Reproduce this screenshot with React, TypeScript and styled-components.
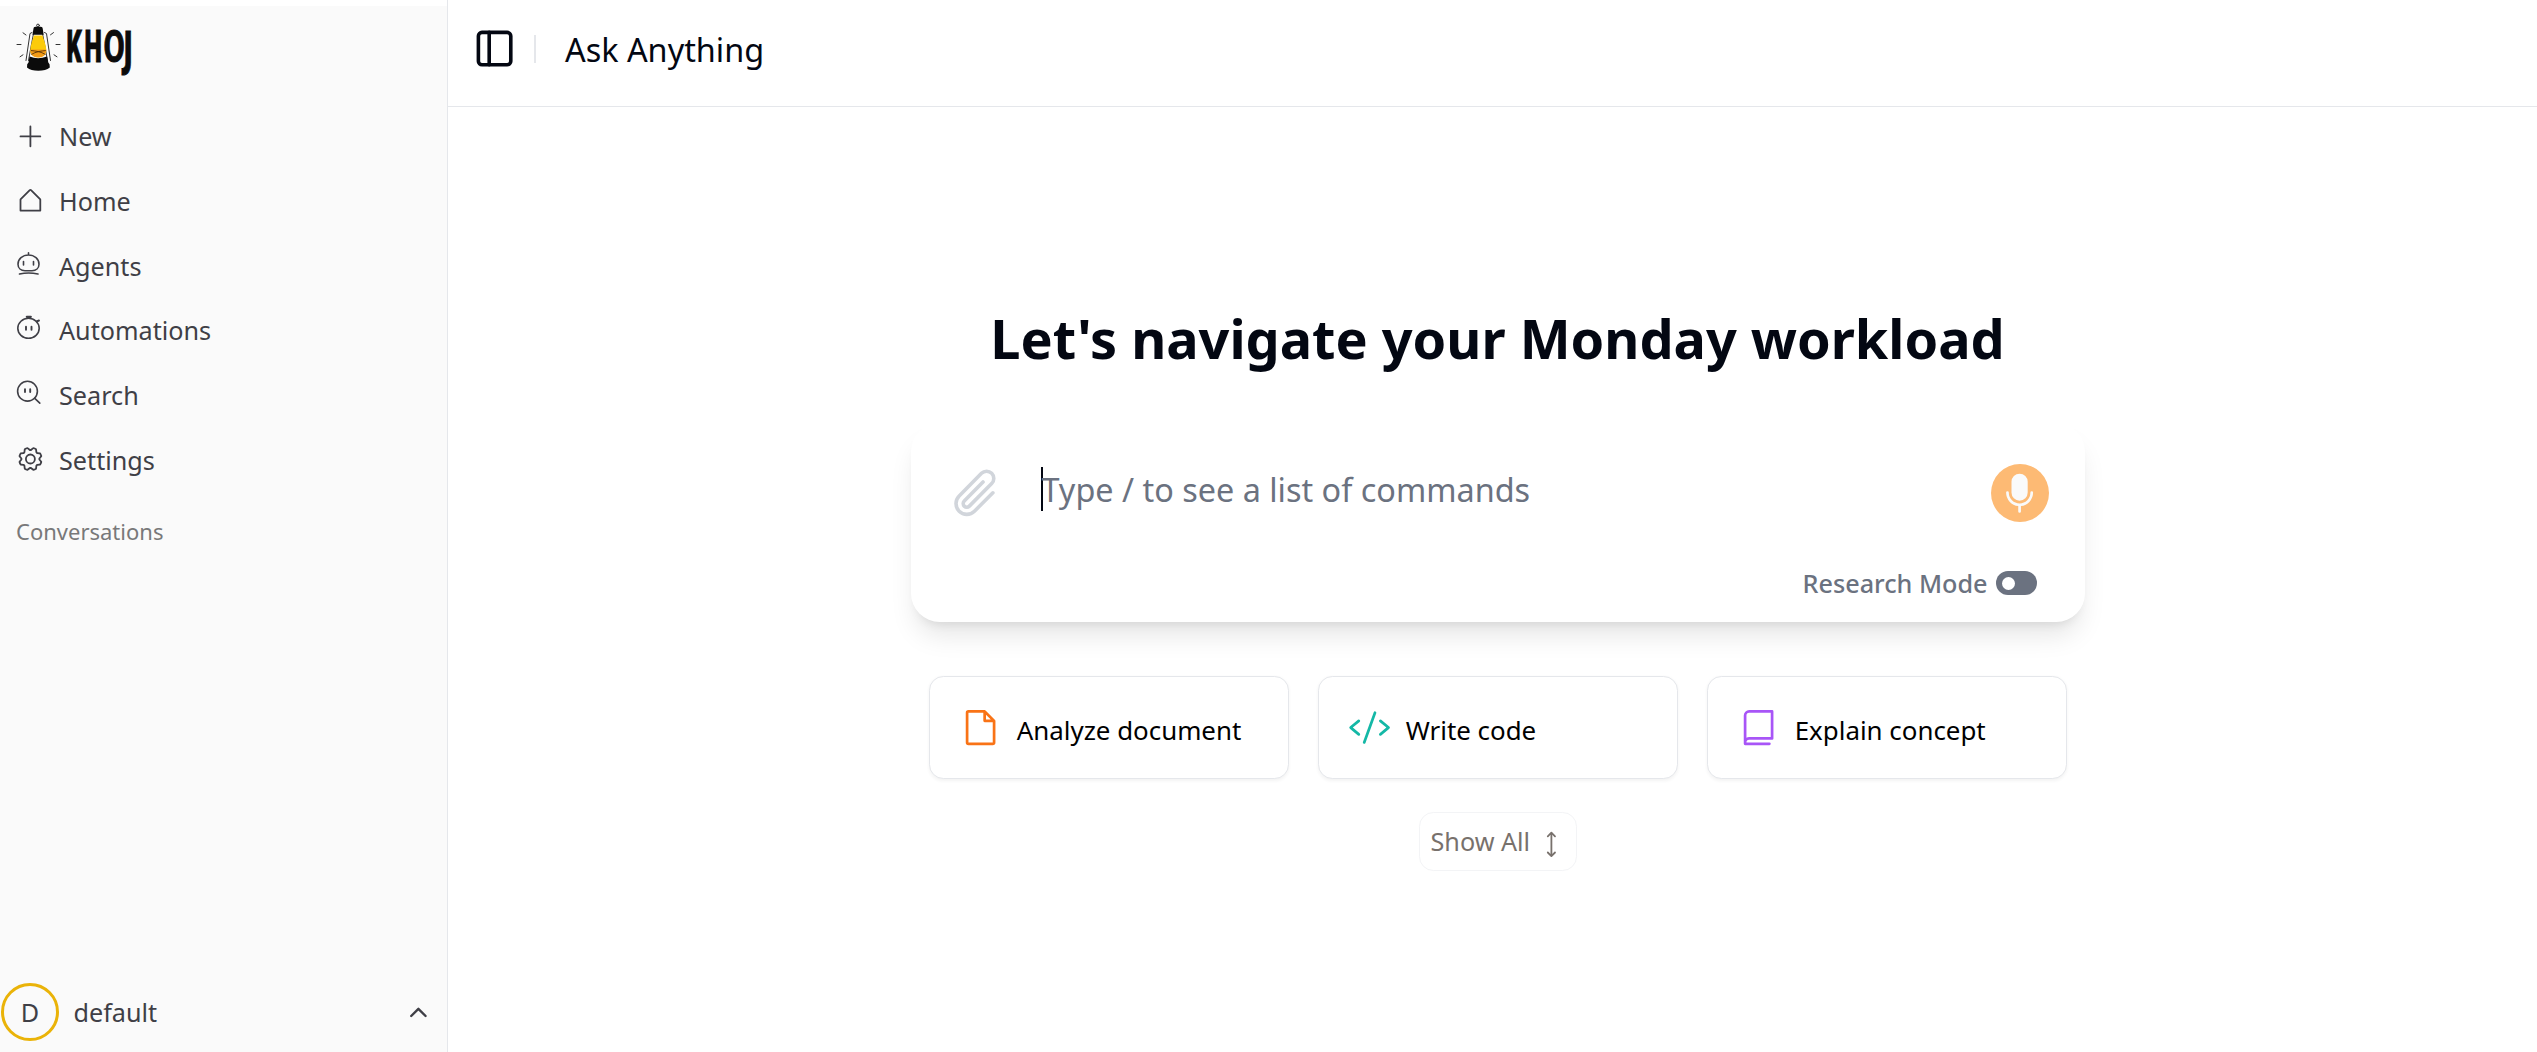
import React from 'react';
import styled, { createGlobalStyle } from 'styled-components';
import { PanelLeft, ChevronUp } from 'lucide-react';
import {
  PiPlus,
  PiHouseSimple,
  PiGear,
  PiPaperclip,
  PiMicrophoneFill,
  PiFile,
  PiCode,
  PiBook,
  PiArrowsVertical,
} from 'react-icons/pi';

const GlobalStyle = createGlobalStyle`
  *, *::before, *::after { box-sizing: border-box; }
  html, body, #root { height: 100%; }
  body {
    margin: 0;
    background: #fff;
    color: #030712;
    font-family: "Noto Sans", sans-serif;
    overflow: hidden;
  }
  button { font: inherit; color: inherit; background: none; border: 0; padding: 0; }
  svg { display: block; flex: none; }
`;

const Shell = styled.div`
  display: flex;
  height: 1052px;
`;

const Sidebar = styled.aside`
  display: flex;
  flex-direction: column;
  flex: none;
  width: 448px;
  padding-top: 6px;
  border-right: 1px solid #e5e7eb;
  background: #fafafa linear-gradient(#fff, #fff) 0 0 / 100% 6px no-repeat;
  color: #3f3f46;
`;

const Brand = styled.div`
  height: 98px;
  padding: 16px 0 0 14px;
`;

const Nav = styled.nav`
  display: flex;
  flex-direction: column;
`;

const NavItem = styled.a`
  display: flex;
  align-items: center;
  height: 64.7px;
  padding-left: 16px;
  font-size: 25.2px;
  line-height: 36px;
`;

const NavIcon = styled.span<{ $lift?: number }>`
  display: flex;
  flex: none;
  width: 43px;
  transform: translateY(${(p) => -(p.$lift ?? 0)}px);
`;

const SectionLabel = styled.div`
  padding: 22.6px 0 0 16px;
  font-size: 22px;
  line-height: 32px;
  color: #787879;
`;

const UserRow = styled.div`
  display: flex;
  align-items: center;
  height: 58px;
  margin: auto 14px 11px 1px;
  font-size: 25.2px;
`;

const Avatar = styled.span`
  display: grid;
  place-items: center;
  width: 58px;
  height: 58px;
  margin-right: 14.5px;
  border: 3px solid #eab308;
  border-radius: 50%;
`;

const UserName = styled.span`
  flex: 1;
`;

const Main = styled.main`
  display: flex;
  flex: 1;
  flex-direction: column;
  min-width: 0;
`;

const Header = styled.header`
  display: flex;
  align-items: center;
  height: 107px;
  padding: 0 0 8px 25px;
  border-bottom: 1px solid #e5e7eb;
`;

const Divider = styled.span`
  width: 2px;
  height: 28px;
  margin: 0 29px 0 17.8px;
  background: #e5e7eb;
`;

const PageTitle = styled.h2`
  margin: 1px 0 0;
  font-size: 32.4px;
  font-weight: 400;
  line-height: 49px;
`;

const Content = styled.section`
  display: flex;
  flex-direction: column;
  align-items: center;
  padding: 196px 0 0 10px;
`;

const Greeting = styled.h1`
  margin: 0 0 50px;
  font-size: 54px;
  font-weight: 700;
  line-height: 70px;
  white-space: nowrap;
`;

const Composer = styled.div`
  width: 1174px;
  height: 199px;
  padding: 0 36px 0 36px;
  border-radius: 28.8px;
  background: #fff;
  box-shadow: 0 18px 27px -5.4px rgba(0, 0, 0, 0.1), 0 7.2px 10.8px -7.2px rgba(0, 0, 0, 0.1);
`;

const ComposerRow = styled.div`
  display: flex;
  align-items: center;
  height: 140px;
`;

const AttachButton = styled.button`
  display: flex;
  color: #d1d5db;
`;

const Caret = styled.span`
  width: 2px;
  height: 44px;
  margin: 0 0 9px 37px;
  background: #030712;
`;

const Placeholder = styled.span`
  flex: 1;
  margin: 0 0 9px -1.6px;
  font-size: 32.4px;
  color: #6b7280;
`;

const MicButton = styled.button`
  display: grid;
  place-items: center;
  width: 58px;
  height: 58px;
  border-radius: 50%;
  background: #fdba74;
  color: #fafafa;
`;

const ModeRow = styled.div`
  display: flex;
  align-items: center;
  justify-content: flex-end;
  gap: 8px;
  height: 40px;
  padding-right: 12px;
  color: #6b7280;
  font-size: 25.2px;
  font-weight: 500;
`;

const Toggle = styled.span`
  display: flex;
  align-items: center;
  width: 41px;
  height: 24px;
  padding-left: 6px;
  border-radius: 12px;
  background: #6b7280;
`;

const ToggleKnob = styled.span`
  width: 13px;
  height: 13px;
  border-radius: 50%;
  background: #fff;
`;

const Suggestions = styled.div`
  display: flex;
  gap: 29px;
  margin-top: 54px;
`;

const SuggestionCard = styled.button<{ $accent: string }>`
  display: flex;
  align-items: center;
  width: 360px;
  height: 103px;
  padding-left: 29px;
  border: 1px solid #e5e7eb;
  border-radius: 14.4px;
  background: #fff;
  box-shadow: 0 1.8px 3.6px rgba(0, 0, 0, 0.05);
  color: #000;
  font-size: 25.9px;

  svg {
    color: ${(p) => p.$accent};
  }
`;

const SuggestionText = styled.span`
  margin: 5px 0 0 15px;
`;

const ShowAll = styled.button`
  display: flex;
  align-items: center;
  gap: 7px;
  width: 158px;
  height: 59px;
  margin-top: 33px;
  padding: 0 0 2px 11px;
  border: 1px solid #f3f4f6;
  border-radius: 14.4px;
  color: #78716c;
  font-size: 25.2px;

  svg {
    margin-top: 8px;
  }
`;

const LogoSvg = styled.svg`
  overflow: visible;
`;

const KhojLogo = () => (
  <LogoSvg width="122" height="60" viewBox="14 22 122 60" role="img" aria-label="Khoj">
    <g stroke="#333" strokeWidth="1" fill="none" strokeLinecap="round">
      <path d="M17 44.500h4M23 32.800l3 2.200M20 56.800l3-2M56 44.500h4M50.500 34.800l3-2.200M54 54.800l3 2" />
      <circle cx="38" cy="25.500" r="1.400" />
      <path d="M32 32.500l-2 1L26 60.500M44.500 32.500l2 1L50.500 60.500M33.500 33.500L28.500 60.500M42.500 33.500L47.500 60.500" />
    </g>
    <path d="M34 35.500h8.500c1.200 4 3.800 9.500 3.800 15 0 4-3.300 6.800-8 6.800s-8-2.800-8-6.800c0-5.500 2.500-11 3.700-15z" fill="#fccb0b" />
    <path d="M30.300 49.500h16c0 5-3 8-8 8s-8-3-8-8z" fill="#f49c16" />
    <path d="M31 50.500c4 .5 10 1 14.500 4M45.800 50.500c-4 .5-10 1-14.500 4" stroke="#4d2b05" strokeWidth=".8" fill="none" />
    <path d="M33.500 28.500q0-1.800 1.800-1.800h5.600q1.800 0 1.800 1.800l1 6.300h-11.200z" fill="#0b0b0b" />
    <path d="M29.500 56.500q8.500 3.500 17.500 0l1.300 6q1.700 1.200 1.500 5-4 3.200-11.500 3.200t-11.300-3.200q-.3-3.800 1.500-5z" fill="#0b0b0b" />
    <g fill="#0b0b0b" stroke="#0b0b0b" strokeWidth="1" fontFamily="Roboto, sans-serif" fontWeight="900" fontSize="44">
      <text transform="translate(66.500 62.300) scale(.54 .99)">K</text>
      <text transform="translate(84.500 62.300) scale(.56 .99)">H</text>
      <text transform="translate(103.600 62.300) scale(.7 .99)" fontWeight="700">O</text>
      <text transform="translate(123.300 65.300) scale(.56 .98)" fontFamily="'DejaVu Sans', sans-serif" fontWeight="700" fontSize="47">J</text>
    </g>
  </LogoSvg>
);

const strokeProps = {
  width: 28,
  height: 28,
  viewBox: '0 0 28 28',
  fill: 'none',
  stroke: 'currentColor',
  strokeWidth: 1.6,
  strokeLinecap: 'round' as const,
};

const AgentIcon = () => (
  <svg {...strokeProps}>
    <path d="M12.500 3.800v2.200M12.500 6C6.500 6 2 10 2 15.200c0 4 3 6.500 7 6.500h7c4 0 7-2.500 7-6.500 0-5.200-4.500-9.200-10.500-9.200zM7.500 12.500v3.500M17.500 12.500v3.500" />
    <path d="M3.500 25q9-2 18.500 0" />
  </svg>
);

const AutomationIcon = () => (
  <svg {...strokeProps}>
    <ellipse cx="12.500" cy="15.300" rx="10.700" ry="10" />
    <path d="M10.800 3.800h4" strokeWidth="2.200" />
    <path d="M20.500 8.500l2.500-1M10 13.700v3M15.500 13.700v3" strokeWidth="1.900" />
  </svg>
);

const SearchIcon = () => (
  <svg {...strokeProps}>
    <circle cx="11.500" cy="13.200" r="9.900" />
    <path d="M18.500 20.200l5.300 5" />
    <path d="M9 11.300v2.800M14.200 11.300v2.800" strokeWidth="1.900" />
  </svg>
);

const navItems = [
  { label: 'New', icon: <PiPlus size={28.8} /> },
  { label: 'Home', icon: <PiHouseSimple size={28.8} />, lift: 0.7 },
  { label: 'Agents', icon: <AgentIcon />, lift: 3 },
  { label: 'Automations', icon: <AutomationIcon />, lift: 3 },
  { label: 'Search', icon: <SearchIcon />, lift: 3 },
  { label: 'Settings', icon: <PiGear size={28.8} />, lift: 0.4 },
];

const suggestions = [
  { label: 'Analyze document', accent: '#f97316', icon: <PiFile size={43.2} /> },
  { label: 'Write code', accent: '#14b8a6', icon: <PiCode size={43.2} /> },
  { label: 'Explain concept', accent: '#a855f7', icon: <PiBook size={43.2} /> },
];

export default function App() {
  return (
    <>
      <GlobalStyle />
      <Shell>
        <Sidebar>
          <Brand>
            <KhojLogo />
          </Brand>
          <Nav>
            {navItems.map((item) => (
              <NavItem key={item.label}>
                <NavIcon $lift={item.lift}>{item.icon}</NavIcon>
                {item.label}
              </NavItem>
            ))}
          </Nav>
          <SectionLabel>Conversations</SectionLabel>
          <UserRow>
            <Avatar>D</Avatar>
            <UserName>default</UserName>
            <ChevronUp size={28.8} />
          </UserRow>
        </Sidebar>
        <Main>
          <Header>
            <PanelLeft size={43.2} />
            <Divider />
            <PageTitle>Ask Anything</PageTitle>
          </Header>
          <Content>
            <Greeting>Let's navigate your Monday workload</Greeting>
            <Composer>
              <ComposerRow>
                <AttachButton aria-label="Attach">
                  <PiPaperclip size={57.6} />
                </AttachButton>
                <Caret />
                <Placeholder>Type / to see a list of commands</Placeholder>
                <MicButton aria-label="Record">
                  <PiMicrophoneFill size={43.2} />
                </MicButton>
              </ComposerRow>
              <ModeRow>
                Research Mode
                <Toggle>
                  <ToggleKnob />
                </Toggle>
              </ModeRow>
            </Composer>
            <Suggestions>
              {suggestions.map((s) => (
                <SuggestionCard key={s.label} $accent={s.accent}>
                  {s.icon}
                  <SuggestionText>{s.label}</SuggestionText>
                </SuggestionCard>
              ))}
            </Suggestions>
            <ShowAll>
              Show All
              <PiArrowsVertical size={28.8} />
            </ShowAll>
          </Content>
        </Main>
      </Shell>
    </>
  );
}
